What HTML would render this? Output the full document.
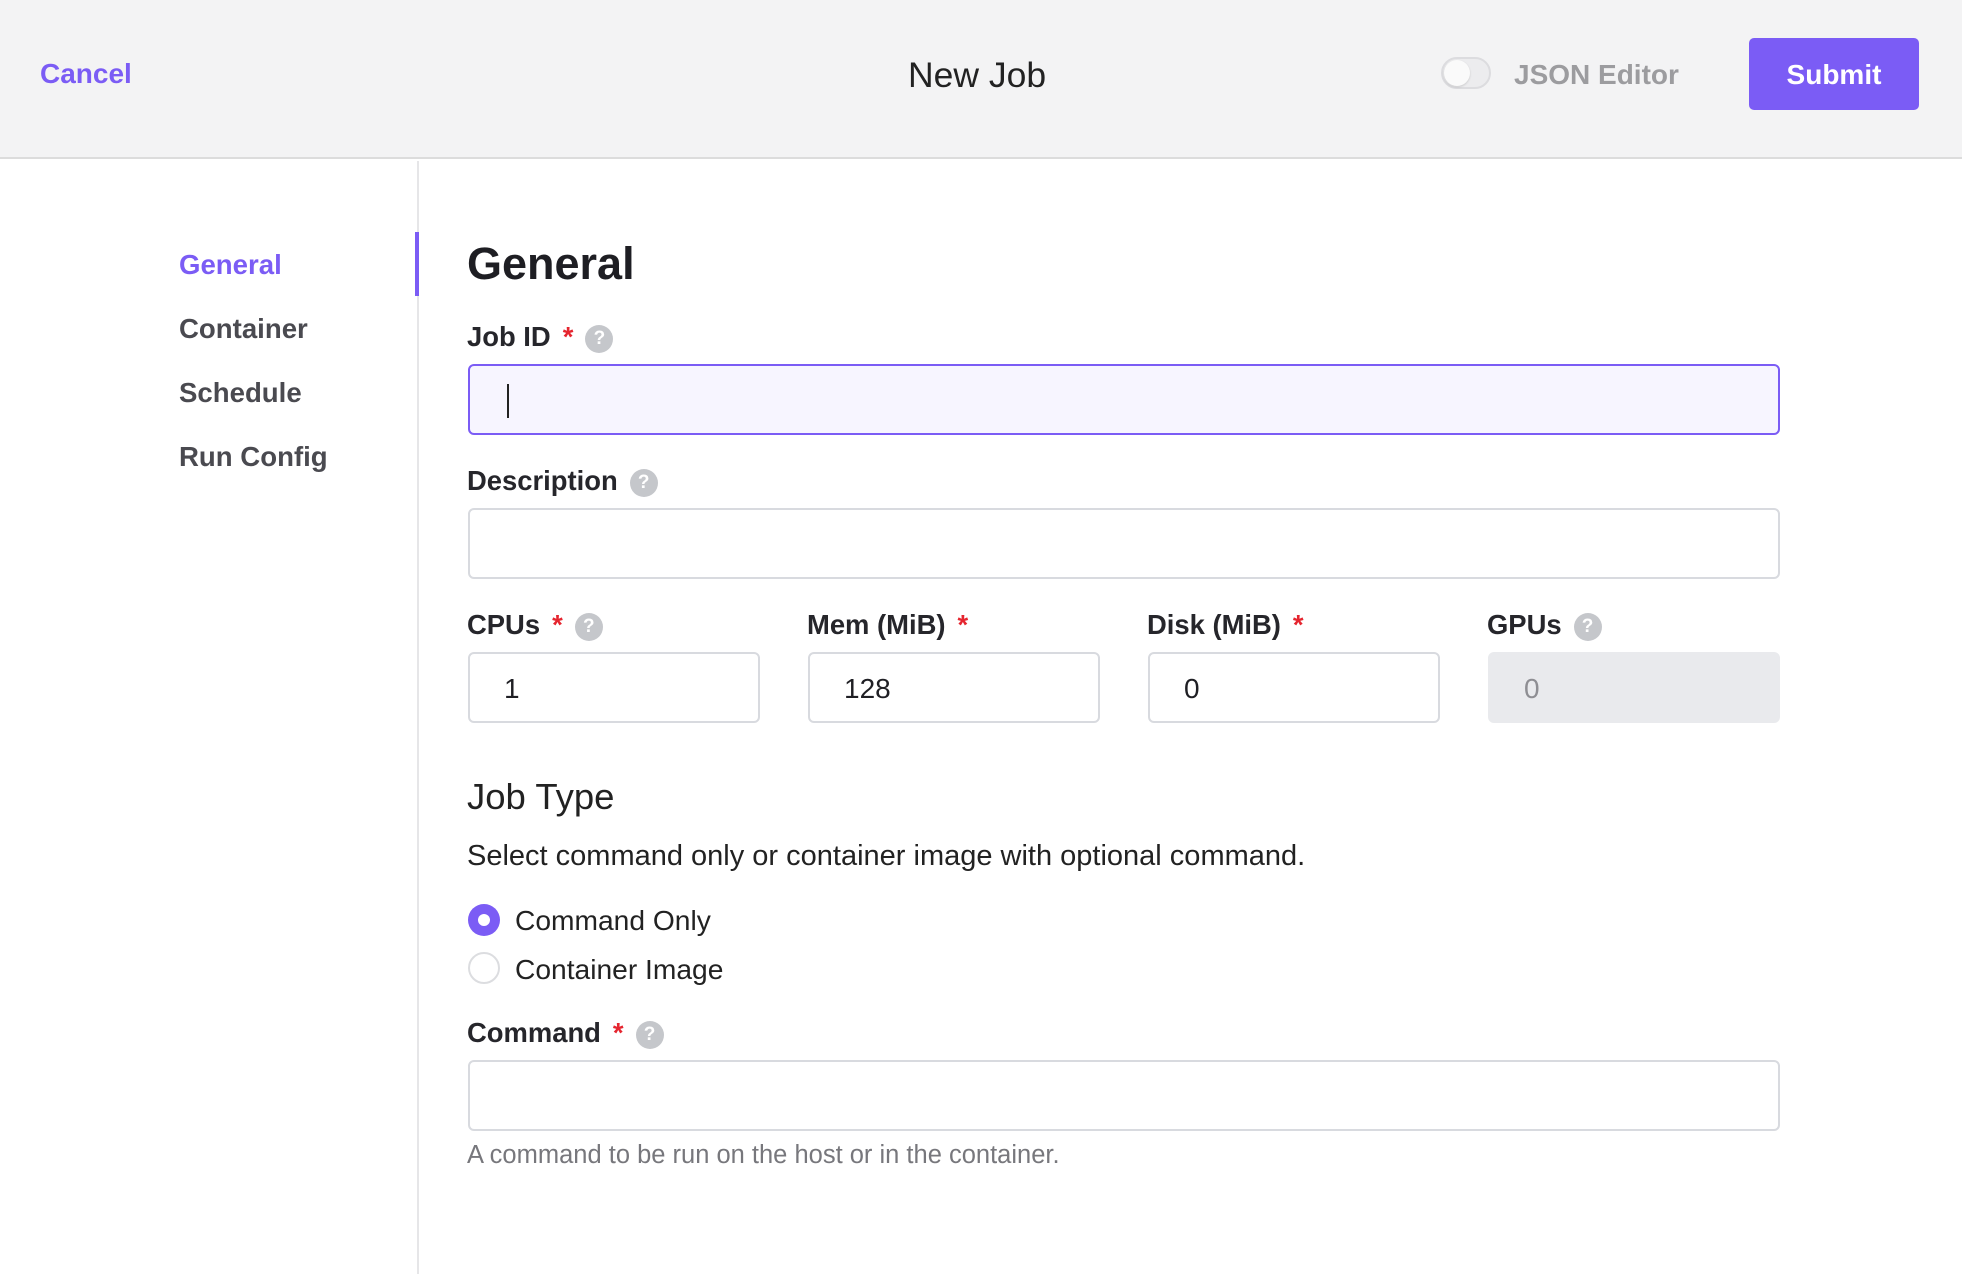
<!DOCTYPE html>
<html><head><meta charset="utf-8"><style>
*{box-sizing:border-box;margin:0;padding:0}
body{width:1962px;height:1274px;background:#fff;font-family:"Liberation Sans",sans-serif;color:#1f1f24;position:relative;overflow:hidden}
.a{position:absolute;white-space:nowrap}
.hdr{position:absolute;left:0;top:0;width:1962px;height:159px;background:#f3f3f4;border-bottom:2px solid #dcdcdc}
.lbl{position:absolute;font-size:27.4px;font-weight:bold;color:#26262b;line-height:32px}
.star{color:#e5252f;margin-left:12px}
.q{display:inline-block;width:28px;height:28px;border-radius:50%;background:#c5c7cb;color:#fff;font-size:19px;text-align:center;line-height:28px;vertical-align:2px;margin-left:12px}
.inp{position:absolute;border:2px solid #d8dadf;border-radius:6px;background:#fff;font-size:28px;padding-left:34px;line-height:70px}
.nav{position:absolute;left:179px;font-size:27.6px;font-weight:bold;color:#4a4a50}
</style></head><body>
<div class="hdr"></div>
<div class="a" style="left:40px;top:58px;font-size:28px;font-weight:bold;color:#7b5cf5">Cancel</div>
<div class="a" style="left:908px;top:55px;font-size:35.5px;color:#222">New Job</div>
<div class="a" style="left:1441px;top:57px;width:50px;height:32px;border-radius:16px;background:#ececee;border:2px solid #dcdcdf"><div style="width:26px;height:26px;border-radius:50%;background:#fafafa;margin:1px;box-shadow:0 1px 2px rgba(0,0,0,.15)"></div></div>
<div class="a" style="left:1514px;top:59px;font-size:28px;font-weight:bold;color:#9c9c9f">JSON Editor</div>
<div class="a" style="left:1749px;top:38px;width:170px;height:72px;background:#7b5cf5;border-radius:5px;color:#fff;font-size:28px;font-weight:bold;text-align:center;line-height:74px">Submit</div>

<div class="a" style="left:417px;top:161px;width:2px;height:1113px;background:#e6e6e8"></div>
<div class="a" style="left:415px;top:232px;width:4px;height:64px;background:#7b5cf5"></div>
<div class="nav" style="top:249px;color:#7b5cf5">General</div>
<div class="nav" style="top:313px">Container</div>
<div class="nav" style="top:377px">Schedule</div>
<div class="nav" style="top:441px">Run Config</div>

<div class="a" style="left:467px;top:238px;font-size:45px;font-weight:bold;color:#1e1e23">General</div>
<div class="lbl" style="left:467px;top:321px">Job ID<span class="star">*</span><span class="q">?</span></div>
<div class="inp" style="left:468px;top:364px;width:1312px;height:71px;border-color:#7b5cf5;background:#f7f5ff"><div style="position:absolute;left:37px;top:18px;width:2px;height:34px;background:#222"></div></div>
<div class="lbl" style="left:467px;top:465px">Description<span class="q">?</span></div>
<div class="inp" style="left:468px;top:508px;width:1312px;height:71px"></div>

<div class="lbl" style="left:467px;top:609px">CPUs<span class="star">*</span><span class="q">?</span></div>
<div class="lbl" style="left:807px;top:609px">Mem (MiB)<span class="star">*</span></div>
<div class="lbl" style="left:1147px;top:609px">Disk (MiB)<span class="star">*</span></div>
<div class="lbl" style="left:1487px;top:609px">GPUs<span class="q">?</span></div>
<div class="inp" style="left:468px;top:652px;width:292px;height:71px">1</div>
<div class="inp" style="left:808px;top:652px;width:292px;height:71px">128</div>
<div class="inp" style="left:1148px;top:652px;width:292px;height:71px">0</div>
<div class="inp" style="left:1488px;top:652px;width:292px;height:71px;background:#e9eaed;border-color:#e9eaed;color:#8e8e93">0</div>

<div class="a" style="left:467px;top:776px;font-size:36.5px;color:#222">Job Type</div>
<div class="a" style="left:467px;top:840px;font-size:29px;color:#222">Select command only or container image with optional command.</div>
<div class="a" style="left:468px;top:904px;width:32px;height:32px;border-radius:50%;background:#7b5cf5"><div style="width:12px;height:12px;background:#fff;border-radius:50%;margin:10px"></div></div>
<div class="a" style="left:515px;top:904px;font-size:28.2px;color:#222">Command Only</div>
<div class="a" style="left:468px;top:952px;width:32px;height:32px;border-radius:50%;border:2px solid #dcdde0;background:#fff"></div>
<div class="a" style="left:515px;top:953px;font-size:28.2px;color:#222">Container Image</div>

<div class="lbl" style="left:467px;top:1017px">Command<span class="star">*</span><span class="q">?</span></div>
<div class="inp" style="left:468px;top:1060px;width:1312px;height:71px"></div>
<div class="a" style="left:467px;top:1141px;font-size:25.5px;color:#77777c">A command to be run on the host or in the container.</div>
</body></html>
